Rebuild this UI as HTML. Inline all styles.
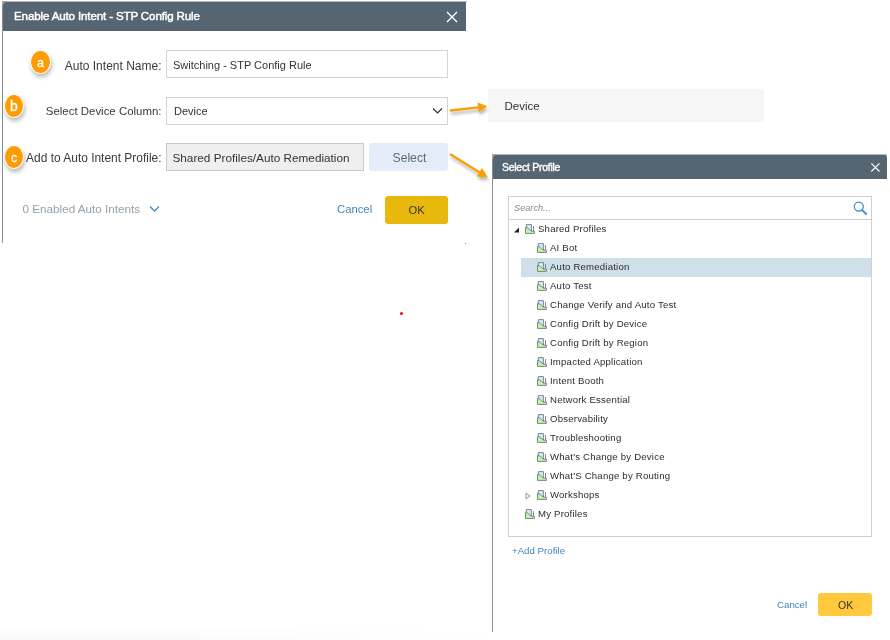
<!DOCTYPE html>
<html><head><meta charset="utf-8">
<style>
*{box-sizing:border-box;margin:0;padding:0}
html,body{width:890px;height:640px;overflow:hidden;background:#fff;font-family:"Liberation Sans",sans-serif;color:#333}
#root{position:absolute;left:0;top:0;width:890px;height:640px;will-change:transform}
.a{position:absolute;white-space:nowrap}
.hdr{background:#556672;color:#fff;font-weight:bold}
.badge{position:absolute;border-radius:50%;background:#ff9d00;border:1px solid #fff;box-shadow:1px 3px 4px rgba(0,0,0,.28);color:#fff;text-align:center;-webkit-text-stroke:0.3px #fff}
.inp{position:absolute;border:1px solid #d2d2d2;background:#fff}
.tl{position:absolute;font-size:9.6px;letter-spacing:0.2px;color:#2c2c2c;line-height:12px;white-space:nowrap}
.ic{position:absolute;width:10px;height:10px}
</style></head><body><div id="root">

<!-- Dialog 1 -->
<div class="a" style="left:2px;top:1px;width:465px;height:1px;background:#b8b8b8"></div>
<div class="a" style="left:2px;top:1px;width:1px;height:242px;background:#8c9096"></div>
<div class="a" style="left:2px;top:1px;width:5px;height:5px;background:#a0a4a8"></div>
<div class="a hdr" style="left:3px;top:2px;width:463px;height:29px;border-top-left-radius:4px"></div>
<div class="a" style="left:14px;top:10px;font-size:11.6px;letter-spacing:-0.15px;-webkit-text-stroke:0.45px #fff;color:#fff;line-height:12px">Enable Auto Intent - STP Config Rule</div>
<svg class="a" style="left:446px;top:11px" width="12" height="12" viewBox="0 0 12 12"><path d="M1 1L11 11M11 1L1 11" stroke="#fff" stroke-width="1.4"/></svg>

<div class="a" style="right:728.5px;top:58.5px;font-size:12px;line-height:14px;color:#3a3a3a">Auto Intent Name:</div>
<div class="inp" style="left:166px;top:50px;width:282px;height:28px"></div>
<div class="a" style="left:173px;top:58px;font-size:11px;line-height:14px;color:#333">Switching - STP Config Rule</div>

<div class="a" style="right:728.5px;top:104px;font-size:11.45px;line-height:14px;color:#3a3a3a">Select Device Column:</div>
<div class="inp" style="left:166px;top:97px;width:282px;height:28px"></div>
<div class="a" style="left:174px;top:104px;font-size:11px;line-height:14px;color:#333">Device</div>
<svg class="a" style="left:432px;top:107px" width="12" height="8" viewBox="0 0 12 8"><path d="M1 1.5L5.5 6L10 1.5" stroke="#333" stroke-width="1.2" fill="none"/></svg>

<div class="a" style="right:728.5px;top:151px;font-size:11.95px;line-height:14px;color:#3a3a3a">Add to Auto Intent Profile:</div>
<div class="inp" style="left:166px;top:143px;width:198px;height:28px;background:#efefef;border-color:#c8c8c8"></div>
<div class="a" style="left:172.5px;top:151px;font-size:11.75px;line-height:14px;color:#333">Shared Profiles/Auto Remediation</div>
<div class="a" style="left:369px;top:143px;width:79px;height:28px;background:#e3ecf8;border-radius:3px"></div>
<div class="a" style="left:392.5px;top:151px;font-size:12.2px;line-height:14px;color:#5b6b78">Select</div>

<div class="a" style="left:22.5px;top:202px;font-size:11.7px;line-height:14px;color:#95a1ab">0 Enabled Auto Intents</div>
<svg class="a" style="left:149px;top:205px" width="11" height="8" viewBox="0 0 11 8"><path d="M1 1.5L5.5 6L10 1.5" stroke="#4a8cc4" stroke-width="1.4" fill="none"/></svg>
<div class="a" style="left:337px;top:202px;font-size:11.3px;line-height:14px;color:#3f86c0">Cancel</div>
<div class="a" style="left:385px;top:196px;width:63px;height:28px;background:#e9b80c;border-radius:3px"></div>
<div class="a" style="left:408.5px;top:203px;font-size:11.2px;line-height:14px;color:#333">OK</div>
<div class="a" style="left:465px;top:243px;width:1px;height:1px;background:#888"></div>

<!-- badges -->
<div class="badge" style="left:30px;top:50px;width:21px;height:24px;font-size:12.5px;line-height:24px">a</div>
<div class="badge" style="left:4px;top:94px;width:20px;height:24px;font-size:14px;line-height:23px">b</div>
<div class="badge" style="left:4px;top:145px;width:20px;height:24px;font-size:12.5px;line-height:24px">c</div>

<div class="a" style="left:0;top:624px;width:520px;height:16px;background:linear-gradient(to right,rgba(0,0,0,.025),rgba(0,0,0,.015) 50%,rgba(0,0,0,0));-webkit-mask-image:linear-gradient(to bottom,transparent,#000)"></div>
<!-- red dot -->
<div class="a" style="left:400px;top:312px;width:3px;height:3px;border-radius:50%;background:#e00"></div>

<!-- Device popup -->
<div class="a" style="left:488px;top:89px;width:276px;height:33px;background:#f6f6f6"></div>
<div class="a" style="left:504.5px;top:98.5px;font-size:11.5px;line-height:14px;color:#333">Device</div>

<!-- arrows -->
<svg class="a" style="left:0;top:0" width="890" height="640" viewBox="0 0 890 640">
<defs><filter id="sh" x="-20%" y="-50%" width="140%" height="250%"><feGaussianBlur in="SourceAlpha" stdDeviation="1.5"/><feOffset dx="1" dy="3"/><feComponentTransfer><feFuncA type="linear" slope="0.3"/></feComponentTransfer><feMerge><feMergeNode/><feMergeNode in="SourceGraphic"/></feMerge></filter></defs>
<g filter="url(#sh)" fill="#f99f05" stroke="none">
<path d="M450.93 111.64L478.29 108.49L478.72 112.22L487.30 106.30L477.60 102.48L478.03 106.21L450.67 109.36Z"/><circle cx="450.8" cy="110.5" r="1.15"/>
<path d="M450.20 155.58L478.68 173.13L476.66 176.41L487.80 177.40L481.91 167.90L479.89 171.17L451.40 153.62Z"/><circle cx="450.8" cy="154.6" r="1.15"/>
</g>
</svg>

<!-- Dialog 2 -->
<div class="a" style="left:492px;top:154px;width:395px;height:1px;background:#b8b8b8"></div>
<div class="a" style="left:492px;top:154px;width:1px;height:478px;background:#8c9096"></div>
<div class="a" style="left:492px;top:154px;width:5px;height:5px;background:#a0a4a8"></div>
<div class="a hdr" style="left:493px;top:155px;width:394px;height:24px;border-top-left-radius:4px;border-top-right-radius:2px"></div>
<div class="a" style="left:502px;top:161.7px;font-size:10.4px;letter-spacing:-0.22px;-webkit-text-stroke:0.4px #fff;color:#fff;line-height:11px">Select Profile</div>
<svg class="a" style="left:870px;top:162px" width="11" height="11" viewBox="0 0 11 11"><path d="M1.3 1.3L9.5 9.5M9.5 1.3L1.3 9.5" stroke="#fff" stroke-width="1.1"/></svg>

<div class="inp" style="left:508px;top:196px;width:364px;height:341px;border-color:#d0d0d0"></div>
<div class="a" style="left:509px;top:219px;width:362px;height:1px;background:#d0d0d0"></div>
<div class="a" style="left:514px;top:203px;font-size:9.2px;font-style:italic;color:#8a8a8a;line-height:11px">Search...</div>
<svg class="a" style="left:852px;top:200px" width="16" height="16" viewBox="0 0 16 16"><circle cx="6.8" cy="6.6" r="4.5" stroke="#3d8fc8" stroke-width="1.3" fill="none"/><path d="M10 9.9L14.2 14" stroke="#3d8fc8" stroke-width="1.9" stroke-linecap="round"/></svg>

<div class="a" style="left:521px;top:257.5px;width:350px;height:19px;background:#cedfe8"></div>

<div id="tree"><svg class="ic" style="left:525px;top:224px" viewBox="0 0 10 10"><path d="M1.3 0.6H6.4V7H1.3Z" fill="#d6ecfb" stroke="#6b7a86" stroke-width="0.9"/><path d="M8.5 2.2V7.2" stroke="#6b7a86" stroke-width="0.9"/><path d="M0.5 3.6Q2.2 3.2 4.2 5.2L6.4 7.2H9.4V9.4H0.5Z" fill="#c3f59e" stroke="#6b7a86" stroke-width="0.9" stroke-linejoin="round"/></svg>
<div class="tl" style="left:538px;top:222.9px">Shared Profiles</div>
<svg class="a" style="left:513px;top:227px" width="7" height="6" viewBox="0 0 7 6"><path d="M6 0.5V5.5H1Z" fill="#222"/></svg>
<svg class="ic" style="left:537px;top:243px" viewBox="0 0 10 10"><path d="M1.3 0.6H6.4V7H1.3Z" fill="#d6ecfb" stroke="#6b7a86" stroke-width="0.9"/><path d="M8.5 2.2V7.2" stroke="#6b7a86" stroke-width="0.9"/><path d="M0.5 3.6Q2.2 3.2 4.2 5.2L6.4 7.2H9.4V9.4H0.5Z" fill="#c3f59e" stroke="#6b7a86" stroke-width="0.9" stroke-linejoin="round"/></svg>
<div class="tl" style="left:550px;top:241.9px">AI Bot</div>
<svg class="ic" style="left:537px;top:262px" viewBox="0 0 10 10"><path d="M1.3 0.6H6.4V7H1.3Z" fill="#d6ecfb" stroke="#6b7a86" stroke-width="0.9"/><path d="M8.5 2.2V7.2" stroke="#6b7a86" stroke-width="0.9"/><path d="M0.5 3.6Q2.2 3.2 4.2 5.2L6.4 7.2H9.4V9.4H0.5Z" fill="#c3f59e" stroke="#6b7a86" stroke-width="0.9" stroke-linejoin="round"/></svg>
<div class="tl" style="left:550px;top:260.9px">Auto Remediation</div>
<svg class="ic" style="left:537px;top:281px" viewBox="0 0 10 10"><path d="M1.3 0.6H6.4V7H1.3Z" fill="#d6ecfb" stroke="#6b7a86" stroke-width="0.9"/><path d="M8.5 2.2V7.2" stroke="#6b7a86" stroke-width="0.9"/><path d="M0.5 3.6Q2.2 3.2 4.2 5.2L6.4 7.2H9.4V9.4H0.5Z" fill="#c3f59e" stroke="#6b7a86" stroke-width="0.9" stroke-linejoin="round"/></svg>
<div class="tl" style="left:550px;top:279.9px">Auto Test</div>
<svg class="ic" style="left:537px;top:300px" viewBox="0 0 10 10"><path d="M1.3 0.6H6.4V7H1.3Z" fill="#d6ecfb" stroke="#6b7a86" stroke-width="0.9"/><path d="M8.5 2.2V7.2" stroke="#6b7a86" stroke-width="0.9"/><path d="M0.5 3.6Q2.2 3.2 4.2 5.2L6.4 7.2H9.4V9.4H0.5Z" fill="#c3f59e" stroke="#6b7a86" stroke-width="0.9" stroke-linejoin="round"/></svg>
<div class="tl" style="left:550px;top:298.9px">Change Verify and Auto Test</div>
<svg class="ic" style="left:537px;top:319px" viewBox="0 0 10 10"><path d="M1.3 0.6H6.4V7H1.3Z" fill="#d6ecfb" stroke="#6b7a86" stroke-width="0.9"/><path d="M8.5 2.2V7.2" stroke="#6b7a86" stroke-width="0.9"/><path d="M0.5 3.6Q2.2 3.2 4.2 5.2L6.4 7.2H9.4V9.4H0.5Z" fill="#c3f59e" stroke="#6b7a86" stroke-width="0.9" stroke-linejoin="round"/></svg>
<div class="tl" style="left:550px;top:317.9px">Config Drift by Device</div>
<svg class="ic" style="left:537px;top:338px" viewBox="0 0 10 10"><path d="M1.3 0.6H6.4V7H1.3Z" fill="#d6ecfb" stroke="#6b7a86" stroke-width="0.9"/><path d="M8.5 2.2V7.2" stroke="#6b7a86" stroke-width="0.9"/><path d="M0.5 3.6Q2.2 3.2 4.2 5.2L6.4 7.2H9.4V9.4H0.5Z" fill="#c3f59e" stroke="#6b7a86" stroke-width="0.9" stroke-linejoin="round"/></svg>
<div class="tl" style="left:550px;top:336.9px">Config Drift by Region</div>
<svg class="ic" style="left:537px;top:357px" viewBox="0 0 10 10"><path d="M1.3 0.6H6.4V7H1.3Z" fill="#d6ecfb" stroke="#6b7a86" stroke-width="0.9"/><path d="M8.5 2.2V7.2" stroke="#6b7a86" stroke-width="0.9"/><path d="M0.5 3.6Q2.2 3.2 4.2 5.2L6.4 7.2H9.4V9.4H0.5Z" fill="#c3f59e" stroke="#6b7a86" stroke-width="0.9" stroke-linejoin="round"/></svg>
<div class="tl" style="left:550px;top:355.9px">Impacted Application</div>
<svg class="ic" style="left:537px;top:376px" viewBox="0 0 10 10"><path d="M1.3 0.6H6.4V7H1.3Z" fill="#d6ecfb" stroke="#6b7a86" stroke-width="0.9"/><path d="M8.5 2.2V7.2" stroke="#6b7a86" stroke-width="0.9"/><path d="M0.5 3.6Q2.2 3.2 4.2 5.2L6.4 7.2H9.4V9.4H0.5Z" fill="#c3f59e" stroke="#6b7a86" stroke-width="0.9" stroke-linejoin="round"/></svg>
<div class="tl" style="left:550px;top:374.9px">Intent Booth</div>
<svg class="ic" style="left:537px;top:395px" viewBox="0 0 10 10"><path d="M1.3 0.6H6.4V7H1.3Z" fill="#d6ecfb" stroke="#6b7a86" stroke-width="0.9"/><path d="M8.5 2.2V7.2" stroke="#6b7a86" stroke-width="0.9"/><path d="M0.5 3.6Q2.2 3.2 4.2 5.2L6.4 7.2H9.4V9.4H0.5Z" fill="#c3f59e" stroke="#6b7a86" stroke-width="0.9" stroke-linejoin="round"/></svg>
<div class="tl" style="left:550px;top:393.9px">Network Essential</div>
<svg class="ic" style="left:537px;top:414px" viewBox="0 0 10 10"><path d="M1.3 0.6H6.4V7H1.3Z" fill="#d6ecfb" stroke="#6b7a86" stroke-width="0.9"/><path d="M8.5 2.2V7.2" stroke="#6b7a86" stroke-width="0.9"/><path d="M0.5 3.6Q2.2 3.2 4.2 5.2L6.4 7.2H9.4V9.4H0.5Z" fill="#c3f59e" stroke="#6b7a86" stroke-width="0.9" stroke-linejoin="round"/></svg>
<div class="tl" style="left:550px;top:412.9px">Observability</div>
<svg class="ic" style="left:537px;top:433px" viewBox="0 0 10 10"><path d="M1.3 0.6H6.4V7H1.3Z" fill="#d6ecfb" stroke="#6b7a86" stroke-width="0.9"/><path d="M8.5 2.2V7.2" stroke="#6b7a86" stroke-width="0.9"/><path d="M0.5 3.6Q2.2 3.2 4.2 5.2L6.4 7.2H9.4V9.4H0.5Z" fill="#c3f59e" stroke="#6b7a86" stroke-width="0.9" stroke-linejoin="round"/></svg>
<div class="tl" style="left:550px;top:431.9px">Troubleshooting</div>
<svg class="ic" style="left:537px;top:452px" viewBox="0 0 10 10"><path d="M1.3 0.6H6.4V7H1.3Z" fill="#d6ecfb" stroke="#6b7a86" stroke-width="0.9"/><path d="M8.5 2.2V7.2" stroke="#6b7a86" stroke-width="0.9"/><path d="M0.5 3.6Q2.2 3.2 4.2 5.2L6.4 7.2H9.4V9.4H0.5Z" fill="#c3f59e" stroke="#6b7a86" stroke-width="0.9" stroke-linejoin="round"/></svg>
<div class="tl" style="left:550px;top:450.9px">What's Change by Device</div>
<svg class="ic" style="left:537px;top:471px" viewBox="0 0 10 10"><path d="M1.3 0.6H6.4V7H1.3Z" fill="#d6ecfb" stroke="#6b7a86" stroke-width="0.9"/><path d="M8.5 2.2V7.2" stroke="#6b7a86" stroke-width="0.9"/><path d="M0.5 3.6Q2.2 3.2 4.2 5.2L6.4 7.2H9.4V9.4H0.5Z" fill="#c3f59e" stroke="#6b7a86" stroke-width="0.9" stroke-linejoin="round"/></svg>
<div class="tl" style="left:550px;top:469.9px">What'S Change by Routing</div>
<svg class="ic" style="left:537px;top:490px" viewBox="0 0 10 10"><path d="M1.3 0.6H6.4V7H1.3Z" fill="#d6ecfb" stroke="#6b7a86" stroke-width="0.9"/><path d="M8.5 2.2V7.2" stroke="#6b7a86" stroke-width="0.9"/><path d="M0.5 3.6Q2.2 3.2 4.2 5.2L6.4 7.2H9.4V9.4H0.5Z" fill="#c3f59e" stroke="#6b7a86" stroke-width="0.9" stroke-linejoin="round"/></svg>
<div class="tl" style="left:550px;top:488.9px">Workshops</div>
<svg class="a" style="left:525px;top:491.5px" width="6" height="8" viewBox="0 0 6 8"><path d="M1 1L5 4L1 7Z" fill="none" stroke="#888" stroke-width="0.9"/></svg>
<svg class="ic" style="left:525px;top:509px" viewBox="0 0 10 10"><path d="M1.3 0.6H6.4V7H1.3Z" fill="#d6ecfb" stroke="#6b7a86" stroke-width="0.9"/><path d="M8.5 2.2V7.2" stroke="#6b7a86" stroke-width="0.9"/><path d="M0.5 3.6Q2.2 3.2 4.2 5.2L6.4 7.2H9.4V9.4H0.5Z" fill="#c3f59e" stroke="#6b7a86" stroke-width="0.9" stroke-linejoin="round"/></svg>
<div class="tl" style="left:538px;top:507.9px">My Profiles</div></div><!--/tree-->

<div class="a" style="left:512px;top:545px;font-size:9.7px;color:#3f86c0;line-height:11px">+Add Profile</div>
<div class="a" style="left:777px;top:599px;font-size:9.7px;color:#3f86c0;line-height:11px">Cancel</div>
<div class="a" style="left:818px;top:592.5px;width:54px;height:23px;background:#ffc83d;border-radius:3px"></div>
<div class="a" style="left:838px;top:599px;font-size:10.5px;color:#333;line-height:12px">OK</div>

</div></body></html>
